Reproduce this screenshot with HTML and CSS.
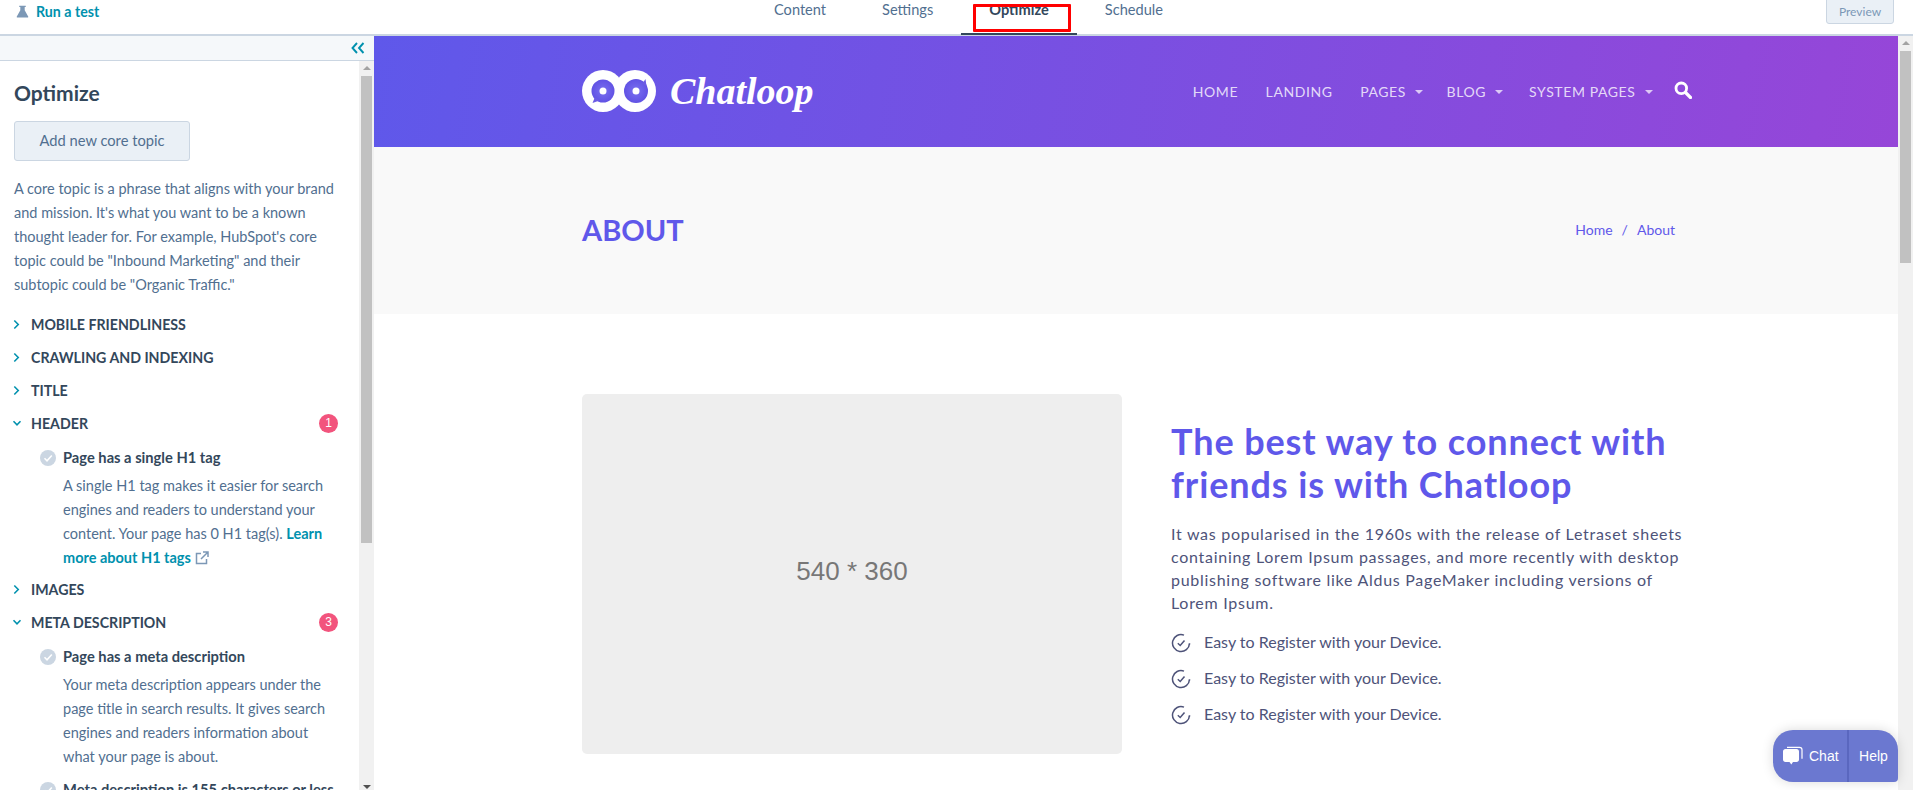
FILE: index.html
```html
<!DOCTYPE html>
<html lang="en">
<head>
<meta charset="utf-8">
<title>Optimize</title>
<link rel="stylesheet" href="styles.css">
</head>
<body>
<div class="app">
  <header class="topbar">
    <div class="topbar-left">
      <svg class="flask" viewBox="0 0 16 16" width="13" height="13"><path d="M4 1h8v1.5h-1.3v4L15 14c.4.8 0 1.5-.9 1.5H1.900C1 15.500.6 14.800 1 14l4.300-7.500v-4H4z" fill="#7c98b6"/></svg>
      <a class="run-test">Run a test</a>
    </div>
    <nav class="tabs">
      <a class="tab">Content</a>
      <a class="tab">Settings</a>
      <a class="tab tab-active">Optimize</a>
      <a class="tab">Schedule</a>
    </nav>
    <button class="preview-btn">Preview</button>
  </header>
  <main class="workspace">
    <aside class="sidebar">
      <div class="collapse-band">
        <svg viewBox="0 0 14 12" width="14" height="12"><path d="M6 1 1.500 6 6 11M12.500 1 8 6l4.500 5" fill="none" stroke="#0091ae" stroke-width="1.900"/></svg>
      </div>
      <div class="sidebar-body">
        <div class="sidebar-content">
          <h2 class="side-title">Optimize</h2>
          <button class="core-btn">Add new core topic</button>
          <p class="side-intro">A core topic is a phrase that aligns with your brand and mission. It's what you want to be a known thought leader for. For example, HubSpot's core topic could be "Inbound Marketing" and their subtopic could be "Organic Traffic."</p>

          <div class="section"><svg class="chev" viewBox="0 0 8 12"><path d="M1.500 1.500 6 6l-4.500 4.500" /></svg><span class="section-name">MOBILE FRIENDLINESS</span></div>
          <div class="section"><svg class="chev" viewBox="0 0 8 12"><path d="M1.500 1.500 6 6l-4.500 4.500" /></svg><span class="section-name">CRAWLING AND INDEXING</span></div>
          <div class="section"><svg class="chev" viewBox="0 0 8 12"><path d="M1.500 1.500 6 6l-4.500 4.500" /></svg><span class="section-name">TITLE</span></div>
          <div class="section"><svg class="chev chev-open" viewBox="0 0 10 8"><path d="M1 1.500 5 5.500l4-4" /></svg><span class="section-name">HEADER</span><span class="badge">1</span></div>
          <div class="check-item">
            <svg class="check" viewBox="0 0 16 16"><circle cx="8" cy="8" r="8" fill="#cbd6e2"/><path d="M4.500 8.300 7 10.800l4.800-5.300" fill="none" stroke="#fff" stroke-width="1.600"/></svg>
            <div class="check-body">
              <div class="check-title">Page has a single H1 tag</div>
              <p class="check-text">A single H1 tag makes it easier for search engines and readers to understand your content. Your page has 0 H1 tag(s). <a class="learn">Learn</a> <a class="learn">more about H1 tags</a> <svg class="ext" viewBox="0 0 14 14" width="14" height="14"><path d="M6 2.500H1.500v10h10V8M8 1h5v5M13 1 6 8" fill="none" stroke="#7c98b6" stroke-width="1.500"/></svg></p>
            </div>
          </div>
          <div class="section"><svg class="chev" viewBox="0 0 8 12"><path d="M1.500 1.500 6 6l-4.500 4.500" /></svg><span class="section-name">IMAGES</span></div>
          <div class="section"><svg class="chev chev-open" viewBox="0 0 10 8"><path d="M1 1.500 5 5.500l4-4" /></svg><span class="section-name">META DESCRIPTION</span><span class="badge">3</span></div>
          <div class="check-item">
            <svg class="check" viewBox="0 0 16 16"><circle cx="8" cy="8" r="8" fill="#cbd6e2"/><path d="M4.500 8.300 7 10.800l4.800-5.300" fill="none" stroke="#fff" stroke-width="1.600"/></svg>
            <div class="check-body">
              <div class="check-title">Page has a meta description</div>
              <p class="check-text">Your meta description appears under the page title in search results. It gives search engines and readers information about what your page is about.</p>
            </div>
          </div>
          <div class="check-item">
            <svg class="check" viewBox="0 0 16 16"><circle cx="8" cy="8" r="8" fill="#cbd6e2"/><path d="M4.500 8.300 7 10.800l4.800-5.300" fill="none" stroke="#fff" stroke-width="1.600"/></svg>
            <div class="check-body">
              <div class="check-title">Meta description is 155 characters or less</div>
            </div>
          </div>
        </div>
        <div class="scrollbar scrollbar-side">
          <span class="arrow-up"></span>
          <span class="thumb thumb-side"></span>
          <span class="scroll-space"></span>
          <span class="arrow-down"></span>
        </div>
      </div>
    </aside>
    <section class="preview">
      <div class="site">
        <div class="site-head">
          <div class="wrap site-head-row">
            <a class="logo">
              <svg class="logo-mark" viewBox="0 0 74 42" width="74" height="42">
                <defs><radialGradient id="lens"><stop offset="0" stop-color="#7a70f0"/><stop offset="1" stop-color="#6152e4"/></radialGradient></defs>
                <circle cx="21" cy="21" r="21" fill="#fff"/><circle cx="53" cy="21" r="21" fill="#fff"/>
                <circle cx="21" cy="21" r="11.500" fill="url(#lens)"/><path d="M13 27l-2.500 6 7-2.500z" fill="#6b5be4"/>
                <circle cx="54" cy="21" r="12" fill="url(#lens)"/><path d="M60 14l3.500-5 1 7z" fill="#6b5be4"/>
                <circle cx="21" cy="21" r="3.500" fill="#fff"/><circle cx="54" cy="21" r="3.500" fill="#fff"/>
              </svg>
              <span class="logo-text">Chatloop</span>
            </a>
            <nav class="site-nav">
              <a class="nav-link">HOME</a>
              <a class="nav-link">LANDING</a>
              <a class="nav-link nav-drop nav-drop-tight">PAGES</a>
              <a class="nav-link nav-drop">BLOG</a>
              <a class="nav-link nav-drop">SYSTEM PAGES</a>
              <svg class="search" viewBox="0 0 18 18" width="18" height="18"><circle cx="7.300" cy="7.300" r="5.300" fill="none" stroke="#fff" stroke-width="2.800"/><path d="M11.500 11.500 16.500 16.500" stroke="#fff" stroke-width="3.200" stroke-linecap="round"/></svg>
            </nav>
          </div>
        </div>
        <div class="page-title">
          <div class="wrap page-title-row">
            <h1 class="about">ABOUT</h1>
            <div class="crumbs"><a>Home</a><span class="crumb-sep">/</span><a>About</a></div>
          </div>
        </div>
        <div class="wrap about-row">
          <div class="placeholder">540 * 360</div>
          <div class="about-copy">
            <h2 class="headline">The best way to connect with friends is with Chatloop</h2>
            <p class="lede">It was popularised in the 1960s with the release of Letraset sheets containing Lorem Ipsum passages, and more recently with desktop publishing software like Aldus PageMaker including versions of Lorem Ipsum.</p>
            <ul class="features">
              <li class="feature"><svg class="tick" viewBox="0 0 20 20"><path d="M18.500 10.500A8.500 8.500 0 1 1 13 2.100M18 6" fill="none" stroke="#4e5379" stroke-width="1.500"/><path d="M18.500 10.500v1" stroke="#4e5379" stroke-width="1.500"/><path d="M6.800 10.300 9.200 12.500 13.500 7.500" fill="none" stroke="#4e5379" stroke-width="1.500"/></svg>Easy to Register with your Device.</li>
              <li class="feature"><svg class="tick" viewBox="0 0 20 20"><path d="M18.500 10.500A8.500 8.500 0 1 1 13 2.100M18 6" fill="none" stroke="#4e5379" stroke-width="1.500"/><path d="M18.500 10.500v1" stroke="#4e5379" stroke-width="1.500"/><path d="M6.800 10.300 9.200 12.500 13.500 7.500" fill="none" stroke="#4e5379" stroke-width="1.500"/></svg>Easy to Register with your Device.</li>
              <li class="feature"><svg class="tick" viewBox="0 0 20 20"><path d="M18.500 10.500A8.500 8.500 0 1 1 13 2.100M18 6" fill="none" stroke="#4e5379" stroke-width="1.500"/><path d="M18.500 10.500v1" stroke="#4e5379" stroke-width="1.500"/><path d="M6.800 10.300 9.200 12.500 13.500 7.500" fill="none" stroke="#4e5379" stroke-width="1.500"/></svg>Easy to Register with your Device.</li>
            </ul>
          </div>
        </div>
      </div>
      <div class="scrollbar scrollbar-main">
        <span class="arrow-up"></span>
        <span class="thumb thumb-main"></span>
        <span class="scroll-space"></span>
      </div>
    </section>
  </main>
  <div class="annotation"></div>
  <div class="chat-widget">
    <div class="chat-part">
      <svg viewBox="0 0 20 20" width="20" height="20"><path d="M2.500 3h11C15 3 16 4 16 5.500v8c0 1.500-1 2.500-2.500 2.500H10l-1.700 2.500L6.500 16h-4C1 16 0 15 0 13.500v-8C0 4 1 3 2.500 3z" fill="#fff"/><path d="M4 1.300h12.500c1.300 0 2.500 1 2.500 2.500v9" fill="none" stroke="#fff" stroke-width="1.200"/></svg>
      <span>Chat</span>
    </div>
    <div class="help-part">Help</div>
  </div>
</div>
</body>
</html>
```

FILE: styles.css
```css
* { box-sizing: border-box; }
html, body { margin: 0; height: 100%; overflow: hidden; background: #fff; }
p, h1, h2, ul { margin: 0; padding: 0; }
.app { position: relative; width: 1913px; height: 790px; display: flex; flex-direction: column; overflow: hidden; font-family: "Lato", sans-serif; color: #33475b; }

.topbar { height: 36px; flex: none; display: flex; align-items: flex-start; border-bottom: 2px solid #cbd6e2; }
.topbar-left { width: 746px; display: flex; align-items: center; gap: 7px; padding: 3px 0 0 16px; height: 20px; }
.run-test { color: #0091ae; font-weight: 700; font-size: 14.200px; }
.tabs { display: flex; height: 34px; }
.tab { padding: 1px 28px 0; height: 34px; font-size: 14.600px; line-height: 18px; color: #516f90; }
.tab-active { color: #33475b; font-weight: 700; border-bottom: 2px solid #33475b; margin-bottom: -1px; height: 35px; }
.preview-btn { margin: -6px 0 0 auto; margin-right: 19px; width: 68px; height: 30px; padding: 5px 0 0; font: 12px "Lato", sans-serif; color: #7c98b6; background: #eaf0f6; border: 1px solid #cbd6e2; border-radius: 3px; }

.workspace { flex: 1; display: flex; min-height: 0; }
.sidebar { width: 374px; flex: none; display: flex; flex-direction: column; min-height: 0; }
.collapse-band { height: 25px; flex: none; display: flex; align-items: center; justify-content: flex-end; padding-right: 9px; background: #f5f8fa; border-bottom: 1px solid #cbd6e2; }
.sidebar-body { flex: 1; display: flex; min-height: 0; }
.sidebar-content { width: 359px; flex: none; overflow: hidden; padding: 20px 24px 0 14px; }
.side-title { font-size: 21px; line-height: 24px; font-weight: 700; color: #33475b; }
.core-btn { display: block; width: 176px; height: 40px; margin-top: 16px; padding: 0 0 2px; background: #eaf0f6; border: 1px solid #cbd6e2; border-radius: 3px; color: #516f90; font: 14.700px "Lato", sans-serif; }
.side-intro { margin-top: 16px; font-size: 14.500px; line-height: 24px; color: #516f90; }

.section { position: relative; height: 33px; display: flex; align-items: center; margin-left: -14px; padding-left: 31px; }
.side-intro + .section { margin-top: 11px; }
.section-name { font-size: 14.200px; font-weight: 700; color: #33475b; }
.chev { position: absolute; left: 13px; top: 11px; width: 7px; height: 11px; fill: none; stroke: #0091ae; stroke-width: 1.800; }
.chev-open { left: 12px; top: 13px; width: 10px; height: 7px; }
.badge { position: absolute; left: 319px; top: 7px; width: 19px; height: 19px; border-radius: 50%; background: #f2547d; color: #fff; font: 12px/18px "Liberation Sans", sans-serif; text-align: center; }

.check-item { display: flex; align-items: flex-start; padding: 2px 0 0 26px; gap: 7px; margin-bottom: 3px; }
.check { flex: none; width: 16px; height: 16px; margin-top: 8px; }
.check-body { flex: 1; min-width: 0; }
.check-title { font-size: 14.700px; font-weight: 700; line-height: 31px; margin-bottom: 1px; white-space: nowrap; color: #33475b; }
.check-text { font-size: 14.500px; line-height: 24px; color: #516f90; }
.learn { color: #0091ae; font-weight: 700; }
.ext { vertical-align: -2px; }

.scrollbar { width: 15px; flex: none; display: flex; flex-direction: column; align-items: center; background: #f1f1f1; }
.arrow-up { flex: none; margin-top: 5px; width: 0; height: 0; border: 4px solid transparent; border-top: 0; border-bottom: 4px solid #a3a3a3; }
.arrow-down { flex: none; margin-bottom: 1px; width: 0; height: 0; border: 4px solid transparent; border-bottom: 0; border-top: 4px solid #505050; }
.thumb { width: 11px; flex: none; background: #c1c1c1; }
.thumb-side { height: 467px; margin-top: 6px; }
.thumb-main { height: 212px; margin-top: 6px; }
.scroll-space { flex: 1; }

.preview { flex: 1; min-width: 0; display: flex; }
.site { flex: 1; min-width: 0; overflow: hidden; color: #4e5379; }
.wrap { width: 1110px; margin: 0 0 0 208px; }
.site-head { height: 111px; background: linear-gradient(100deg, #5f58ea 0%, #9646d8 100%); }
.site-head-row { height: 100%; display: flex; align-items: center; }
.logo { display: flex; align-items: center; gap: 14px; margin-top: -1px; }
.logo-text { font: italic 700 38px/42px "Liberation Serif", serif; color: #fff; }
.site-nav { margin-left: auto; display: flex; align-items: center; gap: 27.500px; }
.nav-link { font-size: 14px; letter-spacing: .6px; color: rgba(255,255,255,.8); }
.nav-drop { margin-right: -1.500px; }
.nav-drop-tight { margin-right: -4px; }
.nav-drop::after { content: ""; display: inline-block; margin-left: 9px; vertical-align: 3px; border: 4px solid transparent; border-bottom: 0; border-top: 4px solid rgba(255,255,255,.7); }
.search { margin: -4px 0 0 -4.500px; }

.page-title { height: 167px; background: #f9f9f9; }
.page-title-row { height: 100%; display: flex; align-items: center; justify-content: space-between; }
.about { font-size: 29px; font-weight: 700; color: #5f58ea; margin-top: -3px; }
.crumbs { font-size: 14px; color: #5f58ea; margin: -3px 17px 0 0; display: flex; gap: 9px; }

.about-row { display: flex; padding-top: 80px; gap: 49px; }
.placeholder { width: 540px; height: 360px; flex: none; background: #eee; border-radius: 5px; padding-bottom: 5px; display: flex; align-items: center; justify-content: center; font: 26px "Liberation Sans", sans-serif; color: #777; }
.about-copy { width: 521px; padding-top: 26px; }
.headline { font-size: 36px; line-height: 43px; font-weight: 700; color: #5f58ea; letter-spacing: .9px; }
.lede { margin-top: 16px; font-size: 16px; line-height: 23px; letter-spacing: .72px; color: #4e5379; }
.features { list-style: none; margin-top: 15px; display: flex; flex-direction: column; gap: 12px; }
.feature { display: flex; align-items: center; gap: 13px; height: 24px; font-size: 16px; color: #4e5379; }
.tick { width: 20px; height: 20px; flex: none; margin-top: 3px; }

.annotation { position: absolute; left: 973px; top: 4px; width: 98px; height: 28px; border: 3px solid #ff0000; border-radius: 1px; }
.chat-widget { position: absolute; left: 1773px; top: 730px; width: 125px; height: 52px; display: flex; background: #6b78d0; border-radius: 20px 20px 4px 20px; box-shadow: 0 0 12px rgba(0,0,0,.15); color: #fff; font: 14px "Liberation Sans", sans-serif; }
.chat-part { width: 76px; display: flex; align-items: center; gap: 6px; padding-left: 10px; border-right: 2px solid #5a67bf; }
.help-part { flex: 1; display: flex; align-items: center; justify-content: center; }
```
